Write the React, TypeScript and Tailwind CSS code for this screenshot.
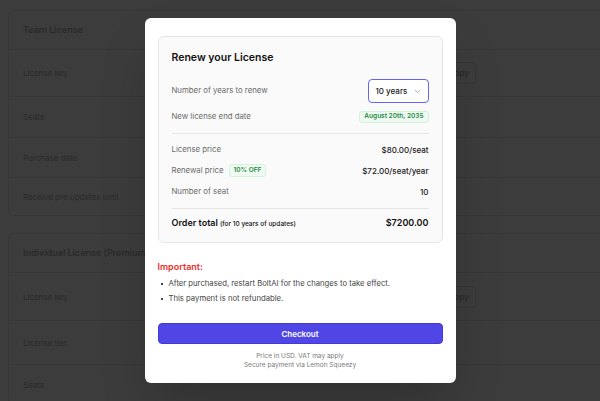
import type React from 'react';
import { ChevronDown } from 'lucide-react';

const BgRow: React.FC<{ label: string; h: string; copy?: boolean }> = ({ label, h, copy }) => (
  <div className={`flex items-center border-t border-[#373737] px-[14px] ${h}`}>
    <div className="flex w-[453px] items-center justify-between">
      <span className="text-[8px] text-[#2a2a2a]">{label}</span>
      {copy && (
        <span className="rounded-[4px] border border-[#363636] px-[6px] py-[5px] text-[8px] font-semibold leading-[10px] text-[#2a2a2a]">
          Copy
        </span>
      )}
    </div>
  </div>
);

const Row: React.FC<{ label: React.ReactNode; value: React.ReactNode }> = ({ label, value }) => (
  <div className="flex h-[21px] items-center justify-between">
    <div className="flex items-center text-[7.8px] text-[#6b6b6b]">{label}</div>
    <div className="text-[8px] font-medium text-[#1a1a1a]">{value}</div>
  </div>
);

const App: React.FC = () => {
  return (
    <div className="relative h-[401px] w-[600px] overflow-hidden bg-[#3c3c3c] font-['Inter',sans-serif]">
      {/* Page behind the dialog */}
      <div className="flex flex-col gap-[17px] pl-[8px] pt-[10px]">
        <div className="w-[640px] rounded-[6px] border border-[#373737]">
          <div className="flex h-[38px] items-center px-[14px] text-[9px] font-semibold text-[#2a2a2a]">Team License</div>
          <BgRow label="License key" h="h-[47px]" copy />
          <BgRow label="Seats" h="h-[41px]" />
          <BgRow label="Purchase date" h="h-[40px]" />
          <BgRow label="Receive pro updates until" h="h-[38px]" />
        </div>
        <div className="w-[640px] rounded-[6px] border border-[#373737]">
          <div className="flex h-[38px] items-center px-[14px] text-[9px] font-semibold text-[#2a2a2a]">
            Individual License (Premium)
          </div>
          <BgRow label="License key" h="h-[48px]" copy />
          <BgRow label="License tier" h="h-[44px]" />
          <BgRow label="Seats" h="h-[40px]" />
        </div>
      </div>

      {/* Dialog */}
      <div className="absolute inset-0 flex items-center justify-center">
        <div className="w-[311px] rounded-[6px] bg-white px-[13px] pb-[13px] pt-[18px] shadow-2xl">
          <div className="rounded-[6px] border border-[#e6e6e6] bg-[#fafafa] px-[13px] pb-[5px] pt-[13px]">
            <h2 className="text-[10.5px] font-semibold leading-[16px] text-[#111]">Renew your License</h2>

            <div className="mt-[13px] flex items-center justify-between">
              <span className="text-[7.8px] text-[#6b6b6b]">Number of years to renew</span>
              <div className="flex h-[24px] w-[61px] items-center justify-between rounded-[4px] border-[1.5px] border-[#6366f1] bg-white pl-[7px] pr-[6px]">
                <span className="text-[8px] font-medium text-[#1a1a1a]">10 years</span>
                <ChevronDown size={9} strokeWidth={1.6} className="text-[#777]" />
              </div>
            </div>

            <div className="mt-[8px] flex items-center justify-between">
              <span className="text-[7.8px] text-[#6b6b6b]">New license end date</span>
              <span className="flex h-[12px] items-center rounded-[3px] border border-[#d5f2dd] bg-[#effbf2] px-[4px] text-[6.5px] font-semibold text-[#1f8a43]">
                August 20th, 2035
              </span>
            </div>

            <div className="mb-[5px] mt-[10px] h-px bg-[#e6e6e6]" />

            <Row label="License price" value="$80.00/seat" />
            <Row
              label={
                <>
                  Renewal price
                  <span className="ml-[5px] flex h-[13px] items-center rounded-[3px] border border-[#d5f2dd] bg-[#effbf2] px-[4px] text-[6.5px] font-semibold text-[#1f8a43]">
                    10% OFF
                  </span>
                </>
              }
              value="$72.00/seat/year"
            />
            <Row label="Number of seat" value="10" />

            <div className="mt-[6px] h-px bg-[#e6e6e6]" />

            <div className="flex h-[28px] items-center justify-between">
              <div className="flex items-baseline text-[#111]">
                <span className="text-[9px] font-semibold">Order total</span>
                <span className="ml-[2px] text-[6.5px] font-medium">(for 10 years of updates)</span>
              </div>
              <span className="text-[9px] font-semibold text-[#111]">$7200.00</span>
            </div>
          </div>

          <p className="mt-[17px] text-[9px] font-semibold leading-[14px] text-[#e5322d]">Important:</p>
          <ul className="mt-[2px] text-[7.7px] text-[#444]">
            <li className="flex h-[15px] items-center">
              <span className="ml-[3px] mr-[6px] h-[2px] w-[2px] bg-[#444]" />
              After purchased, restart BoltAI for the changes to take effect.
            </li>
            <li className="flex h-[15px] items-center">
              <span className="ml-[3px] mr-[6px] h-[2px] w-[2px] bg-[#444]" />
              This payment is not refundable.
            </li>
          </ul>

          <button className="mt-[17px] flex h-[21px] w-full items-center justify-center rounded-[4px] border border-[#4339d9] bg-[#4f46e5] text-[8px] font-semibold text-white">
            Checkout
          </button>

          <div className="mt-[8px] text-center text-[6.5px] leading-[9px] text-[#7a7a7a]">
            <p>Price in USD. VAT may apply</p>
            <p>Secure payment via Lemon Squeezy</p>
          </div>
        </div>
      </div>
    </div>
  );
};

export default App;
